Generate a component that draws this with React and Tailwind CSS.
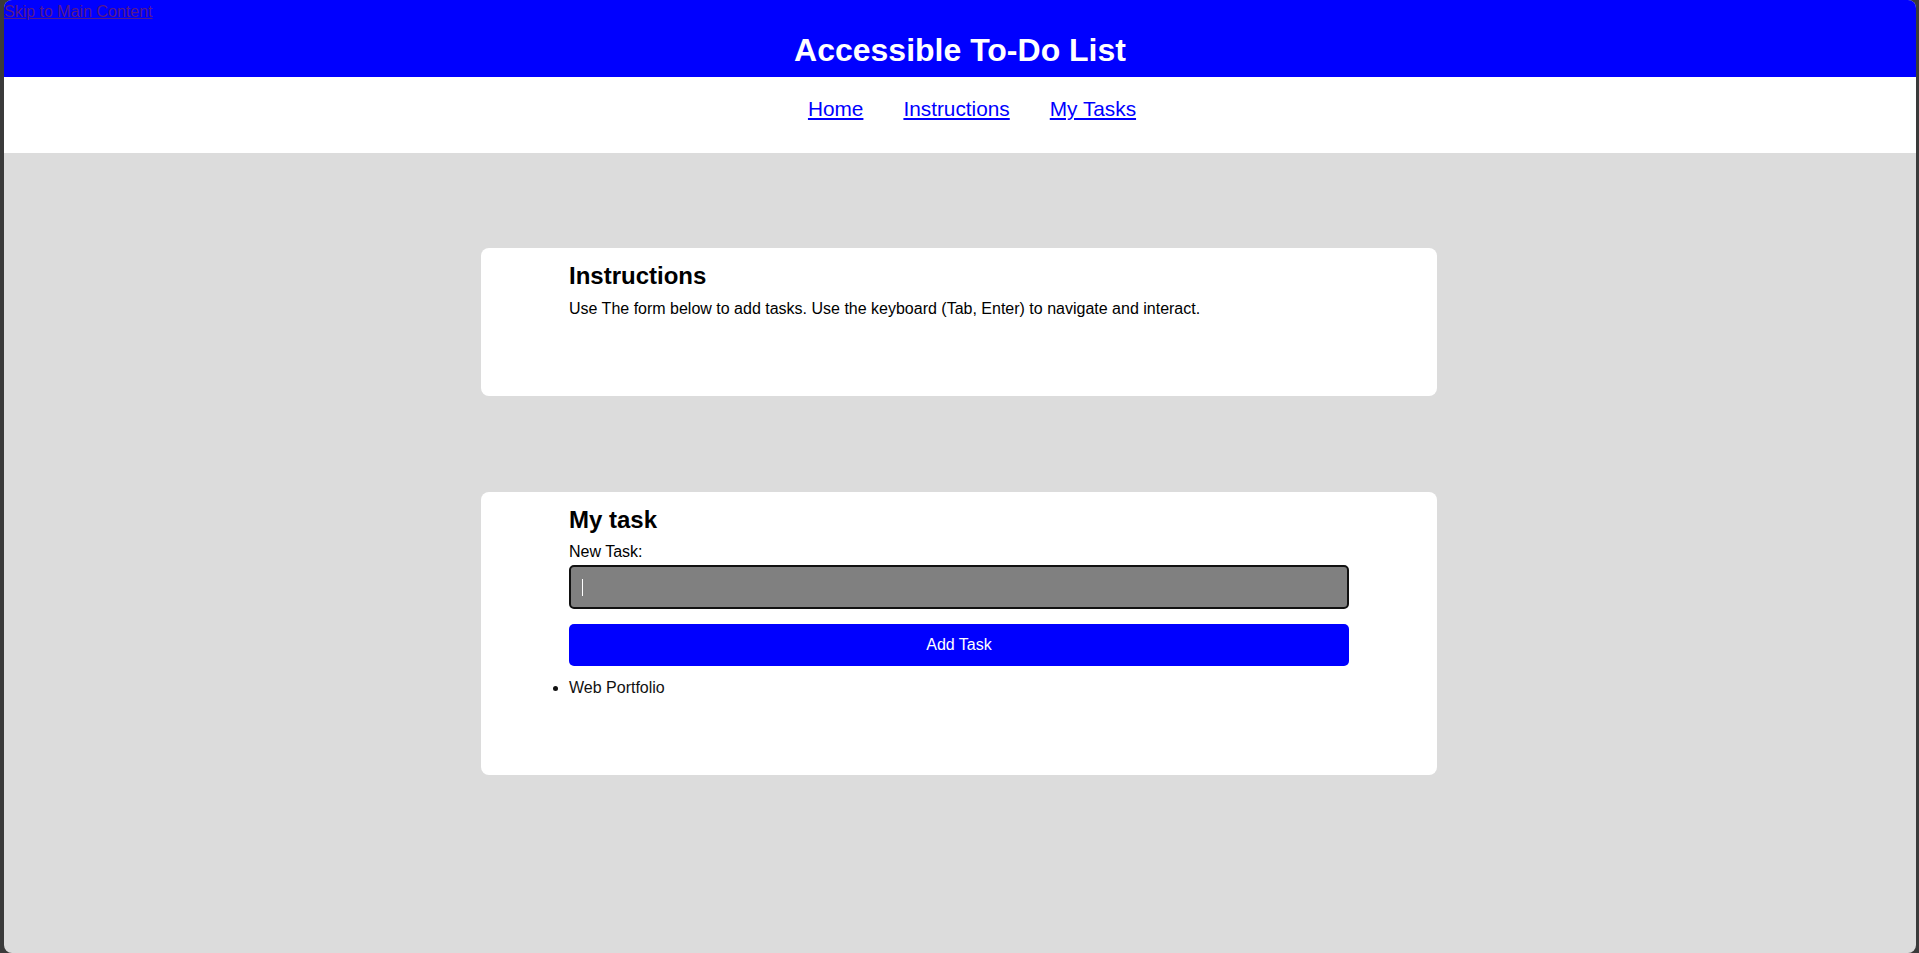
import { useState } from 'react';

const App = () => {
  const [tasks, setTasks] = useState(['Web Portfolio']);
  const [newTask, setNewTask] = useState('');

  const handleAdd = (e) => {
    e.preventDefault();
    if (!newTask.trim()) return;
    setTasks([...tasks, newTask.trim()]);
    setNewTask('');
  };

  return (
    <div className="h-screen bg-[#3a3a3a] pl-[4px] pr-[3px] font-['Liberation_Sans',Arial,sans-serif]">
      <div className="relative h-full rounded-lg overflow-hidden bg-[#dcdcdc]">
        <a
          href="#main"
          className="absolute left-0 top-0 text-[16px] leading-6 text-[#551a8b] underline"
        >
          Skip to Main Content
        </a>

        <header className="bg-[#0000ff] h-[77px] pt-[32px]">
          <h1 className="text-center text-white text-[32px] font-bold leading-[37px]">
            Accessible To-Do List
          </h1>
        </header>

        <nav className="bg-white h-[76px] pt-[20px] pl-[24px]">
          <ul className="flex justify-center gap-[40px] text-[20.8px] leading-[23px]">
            <li><a href="#home" className="text-[#0000ff] underline">Home</a></li>
            <li><a href="#instructions" className="text-[#0000ff] underline">Instructions</a></li>
            <li><a href="#tasks" className="text-[#0000ff] underline">My Tasks</a></li>
          </ul>
        </nav>

        <main id="main" className="pr-[2px]">
          <section
            id="instructions"
            className="mx-auto mt-[95px] w-[956px] bg-white rounded-lg px-[88px] pt-[14px] pb-[78px] text-black"
          >
            <h2 className="text-[24px] font-bold leading-[28px]">Instructions</h2>
            <p className="mt-[10px] text-[16px] leading-[18px]">
              Use The form below to add tasks. Use the keyboard (Tab, Enter) to navigate and interact.
            </p>
          </section>

          <section
            id="tasks"
            className="mx-auto mt-[96px] w-[956px] bg-white rounded-lg px-[88px] pt-[14px] pb-[78px] text-black"
          >
            <h2 className="text-[24px] font-bold leading-[28px]">My task</h2>
            <form onSubmit={handleAdd}>
              <label htmlFor="new-task" className="block mt-[9px] text-[16px] leading-[18px]">
                New Task:
              </label>
              <div className="relative mt-[4px]">
                <input
                  id="new-task"
                  type="text"
                  value={newTask}
                  onChange={(e) => setNewTask(e.target.value)}
                  className="block w-full h-[44px] bg-[#808080] border-2 border-[#111111] rounded-[5px] px-[10px] text-white text-[16px] outline-none"
                />
                {newTask === '' && (
                  <span className="absolute left-[13px] top-[14px] h-[17px] w-px bg-white" />
                )}
              </div>
              <button
                type="submit"
                className="block w-full h-[42px] mt-[15px] bg-[#0000ff] rounded-[5px] text-white text-[16px] leading-[18px]"
              >
                Add Task
              </button>
            </form>
            <ul className="mt-[13px] list-disc text-[16px] leading-[18px] text-[#111111]">
              {tasks.map((task, i) => (
                <li key={i}>{task}</li>
              ))}
            </ul>
          </section>
        </main>
      </div>
    </div>
  );
};

export default App;
